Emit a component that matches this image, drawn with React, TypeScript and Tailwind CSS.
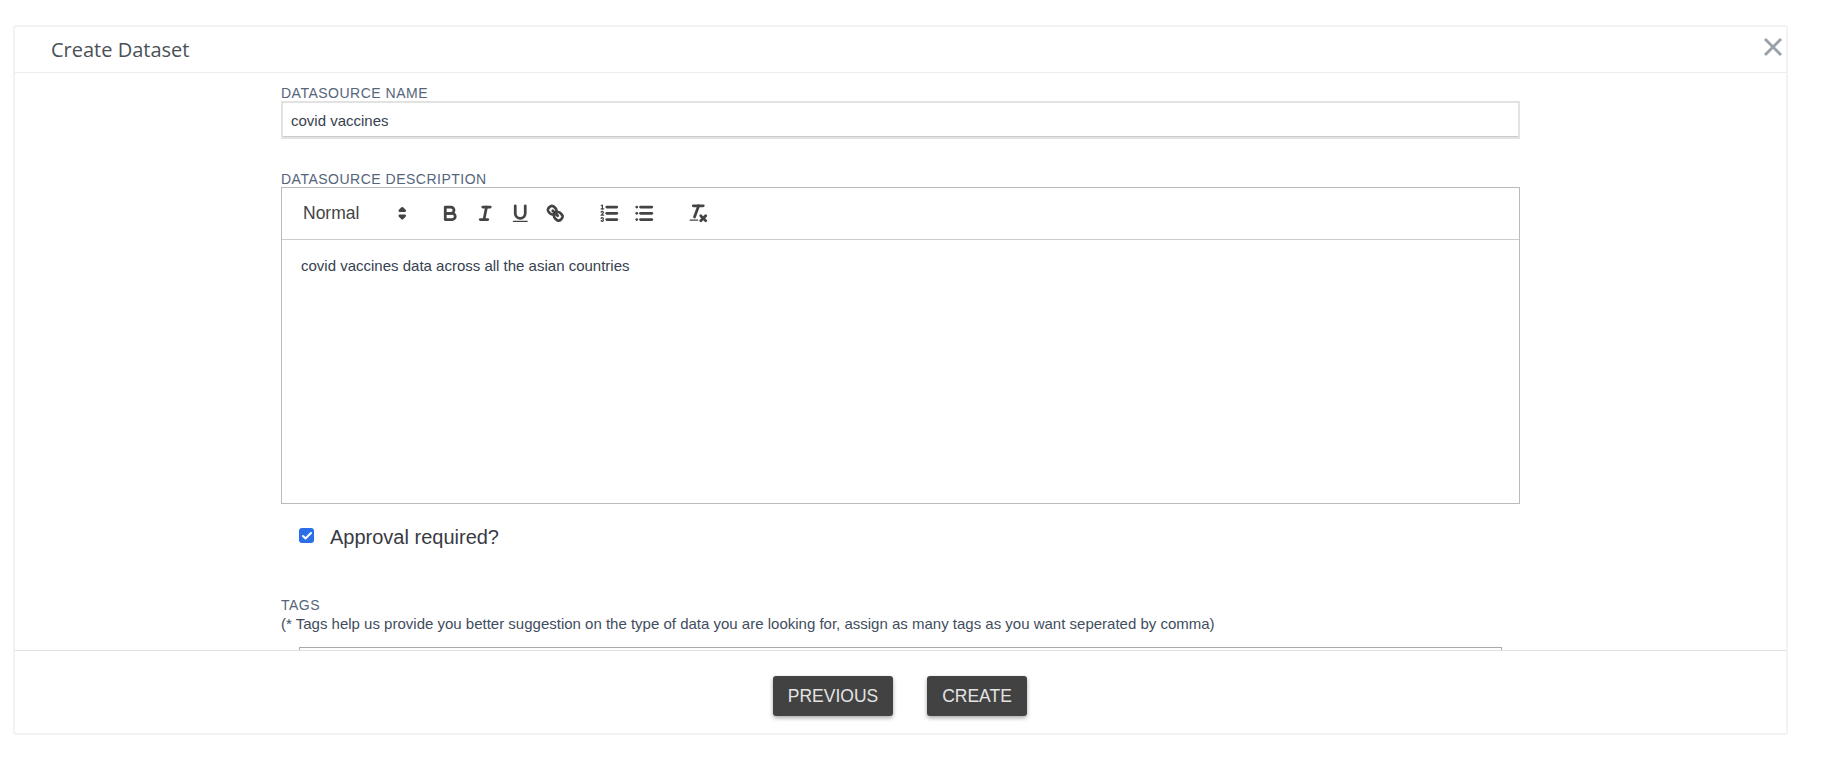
import React from 'react';
import { Check } from 'lucide-react';

const sans = "font-['Liberation_Sans',Arial,sans-serif]";

function ToolIcon({ children }: { children: React.ReactNode }) {
  return (
    <button type="button" className="flex h-[30px] w-[35px] items-center justify-center">
      <svg
        viewBox="0 0 18 18"
        className="h-[22.5px] w-[22.5px]"
        fill="none"
        stroke="#444444"
        strokeWidth={2.2}
        strokeLinecap="round"
        strokeLinejoin="round"
      >
        {children}
      </svg>
    </button>
  );
}

function Toolbar() {
  return (
    <div className="flex h-[52px] items-center border-b border-[#cccccc] pl-[10px]">
      <div className="flex h-[30px] w-[122px] items-center justify-between pl-[11px] pr-[1px] text-[17.5px] text-[#444444]">
        <span>Normal</span>
        <svg viewBox="0 0 18 18" className="h-[22.5px] w-[22.5px]" fill="#444444" stroke="#444444" strokeWidth={2} strokeLinejoin="round">
          <polygon points="7 11 9 13 11 11 7 11" />
          <polygon points="7 7 9 5 11 7 7 7" />
        </svg>
      </div>
      <div className="ml-[19px] flex">
        <ToolIcon>
          <path d="M5,4H9.5A2.5,2.5,0,0,1,12,6.5v0A2.5,2.5,0,0,1,9.5,9H5A0,0,0,0,1,5,9V4A0,0,0,0,1,5,4Z" />
          <path d="M5,9h5.5A2.5,2.5,0,0,1,13,11.5v0A2.5,2.5,0,0,1,10.5,14H5a0,0,0,0,1,0,0V9A0,0,0,0,1,5,9Z" />
        </ToolIcon>
        <ToolIcon>
          <line x1="7" x2="13" y1="4" y2="4" />
          <line x1="5" x2="11" y1="14" y2="14" />
          <line x1="8" x2="10" y1="14" y2="4" />
        </ToolIcon>
        <ToolIcon>
          <path d="M5,3V9a4.012,4.012,0,0,0,4,4H9a4.012,4.012,0,0,0,4-4V3" />
          <rect x="3" y="15" width="12" height="1" rx="0.5" ry="0.5" fill="#444444" stroke="none" />
        </ToolIcon>
        <ToolIcon>
          <line x1="7" x2="11" y1="7" y2="11" />
          <path d="M8.9,4.577a3.476,3.476,0,0,1,.36,4.679A3.476,3.476,0,0,1,4.577,8.9C3.185,7.5,2.035,6.4,4.217,4.217S7.5,3.185,8.9,4.577Z" />
          <path d="M13.423,9.1a3.476,3.476,0,0,0-4.679-.36,3.476,3.476,0,0,0,.36,4.679c1.392,1.392,2.5,2.542,4.679.36S14.815,10.5,13.423,9.1Z" />
        </ToolIcon>
      </div>
      <div className="ml-[19px] flex">
        <ToolIcon>
          <line x1="7" x2="15" y1="4" y2="4" />
          <line x1="7" x2="15" y1="9" y2="9" />
          <line x1="7" x2="15" y1="14" y2="14" />
          <line x1="2.5" x2="4.5" y1="5.5" y2="5.5" strokeWidth={1} />
          <path fill="#444444" stroke="none" d="M3.5,6A0.5,0.5,0,0,1,3,5.5V3.085l-0.276.138A0.5,0.5,0,0,1,2.053,3c-0.124-.247-0.023-0.324.224-0.447l1-.5A0.5,0.5,0,0,1,4,2.5v3A0.5,0.5,0,0,1,3.5,6Z" />
          <path strokeWidth={1} d="M4.5,10.5h-2c0-.234,1.85-1.076,1.85-2.234A0.959,0.959,0,0,0,2.5,8.156" />
          <path strokeWidth={1} d="M2.5,14.846a0.959,0.959,0,0,0,1.85-.109A0.7,0.7,0,0,0,3.75,14a0.688,0.688,0,0,0,.6-0.736,0.959,0.959,0,0,0-1.85-.109" />
        </ToolIcon>
        <ToolIcon>
          <line x1="6" x2="15" y1="4" y2="4" />
          <line x1="6" x2="15" y1="9" y2="9" />
          <line x1="6" x2="15" y1="14" y2="14" />
          <line x1="3" x2="3" y1="4" y2="4" />
          <line x1="3" x2="3" y1="9" y2="9" />
          <line x1="3" x2="3" y1="14" y2="14" />
        </ToolIcon>
      </div>
      <div className="ml-[19px] flex">
        <ToolIcon>
          <line x1="5" x2="13" y1="3" y2="3" />
          <line x1="6" x2="9.35" y1="12" y2="3" />
          <line x1="11" x2="15" y1="11" y2="15" />
          <line x1="15" x2="11" y1="11" y2="15" />
          <rect x="2" y="14" width="7" height="1" rx="0.5" ry="0.5" fill="#444444" stroke="none" />
        </ToolIcon>
      </div>
    </div>
  );
}

export default function App() {
  return (
    <div className={`h-[768px] bg-white pl-[13px] pr-[47px] pt-[25px] ${sans}`}>
      <div className="relative flex h-[710px] flex-col rounded-[3px] border-2 border-[#f1f1f6] bg-white">
        {/* Header */}
        <div className="flex h-[46px] shrink-0 items-center border-b border-[#ececf0] pl-[36px]">
          <h1 className="font-['Open_Sans',sans-serif] text-[20px] text-[#495057]">Create Dataset</h1>
        </div>
        <button type="button" className="absolute right-[1px] top-[8px] text-[#9aa0a8]">
          <svg viewBox="0 0 24 24" className="h-[24px] w-[24px]" fill="none" stroke="currentColor" strokeWidth={2.8}>
            <line x1="4" y1="4" x2="20" y2="20" />
            <line x1="20" y1="4" x2="4" y2="20" />
          </svg>
        </button>

        {/* Form */}
        <div className="min-h-0 flex-1 overflow-hidden">
          <div className="ml-[266px] w-[1239px] pt-[12px]">
            <label className="block text-[14px] leading-[16px] tracking-[0.5px] text-[#55657a]">DATASOURCE NAME</label>
            <div className="h-[38px] border-2 border-[#e2e2e2]">
              <div className="flex h-[34px] items-center border-b border-[#cccccc] pl-[8px] pt-[4px] text-[15px] text-[#36424f]">covid vaccines</div>
            </div>

            <label className="mt-[32px] block text-[14px] leading-[16px] tracking-[0.5px] text-[#55657a]">DATASOURCE DESCRIPTION</label>
            <div className="h-[317px] border border-[#bbbbbb]">
              <Toolbar />
              <div className="pl-[19px] pt-[15px] text-[15px] leading-[21px] text-[#36424f]">
                covid vaccines data across all the asian countries
              </div>
            </div>

            <div className="mt-[23px] flex h-[20px] items-start pl-[18px]">
              <span className="mt-[1px] flex h-[15px] w-[15px] items-center justify-center rounded-[3px] bg-[#2a6fe8]">
                <Check className="h-[12px] w-[12px] text-white" strokeWidth={4} />
              </span>
              <span className="ml-[16px] text-[20px] leading-[20px] text-[#3a3a44]">Approval required?</span>
            </div>

            <label className="mt-[50px] block text-[14px] leading-[16px] tracking-[0.5px] text-[#55657a]">TAGS</label>
            <p className="mt-[2px] text-[15px] leading-[18px] text-[#3f4d5e]">
              (* Tags help us provide you better suggestion on the type of data you are looking for, assign as many tags as you want seperated by comma)
            </p>
            <div className="mx-[18px] mt-[14px] h-[40px] border border-[#aaaaaa]" />
          </div>
        </div>

        {/* Footer */}
        <div className="flex h-[83px] shrink-0 items-start justify-center gap-[34px] border-t border-[#e0e0e4] pr-[1px] pt-[25px]">
          <button type="button" className="h-[40px] w-[120px] rounded-[3px] bg-[#424242] text-[17.5px] text-[#e4e4e4] shadow-[0_2px_4px_rgba(0,0,0,0.35)]">PREVIOUS</button>
          <button type="button" className="h-[40px] w-[100px] rounded-[3px] bg-[#424242] text-[17.5px] text-[#e4e4e4] shadow-[0_2px_4px_rgba(0,0,0,0.35)]">CREATE</button>
        </div>
      </div>
    </div>
  );
}
